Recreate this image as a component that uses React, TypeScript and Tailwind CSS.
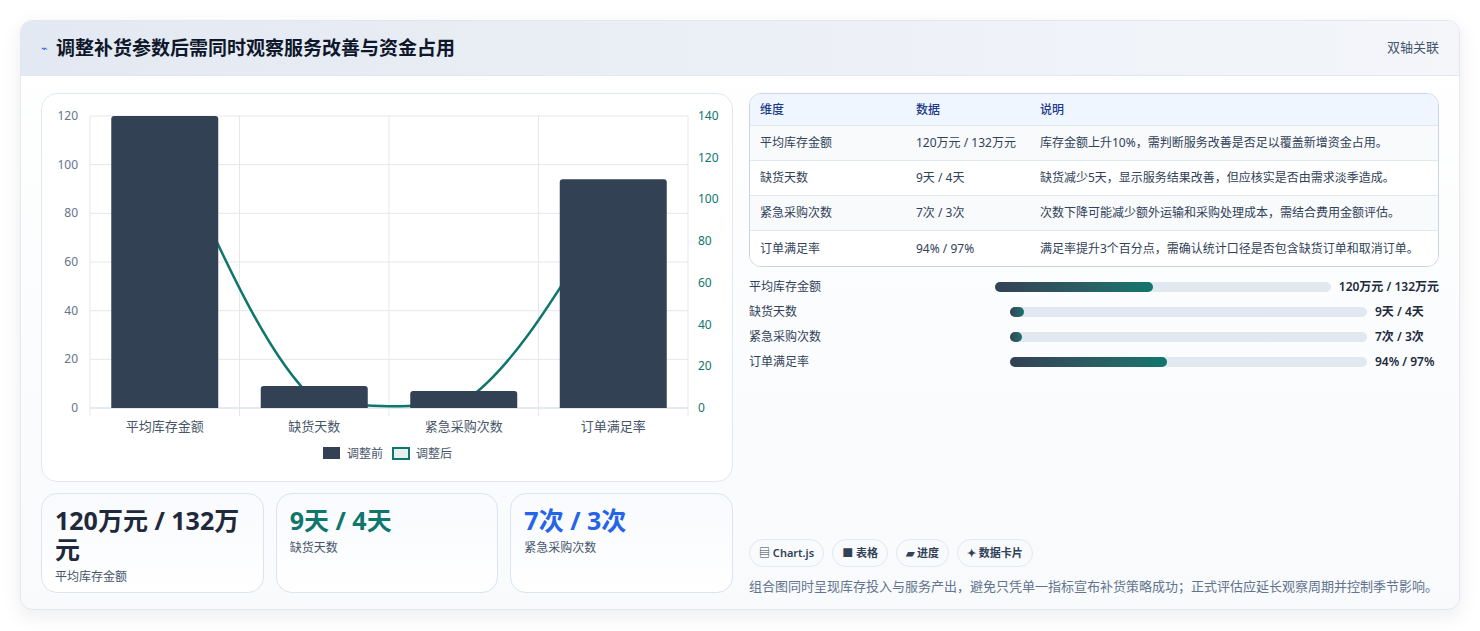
import React from 'react';

const font = { fontFamily: '"Noto Sans", "Noto Sans CJK SC", sans-serif' };

const rows = [
  { name: '平均库存金额', data: '120万元 / 132万元', note: '库存金额上升10%，需判断服务改善是否足以覆盖新增资金占用。' },
  { name: '缺货天数', data: '9天 / 4天', note: '缺货减少5天，显示服务结果改善，但应核实是否由需求淡季造成。' },
  { name: '紧急采购次数', data: '7次 / 3次', note: '次数下降可能减少额外运输和采购处理成本，需结合费用金额评估。' },
  { name: '订单满足率', data: '94% / 97%', note: '满足率提升3个百分点，需确认统计口径是否包含缺货订单和取消订单。' },
];

const progress = [
  { name: '平均库存金额', value: '120万元 / 132万元', pct: 47 },
  { name: '缺货天数', value: '9天 / 4天', pct: 4 },
  { name: '紧急采购次数', value: '7次 / 3次', pct: 3.5 },
  { name: '订单满足率', value: '94% / 97%', pct: 44 },
];

function Chart() {
  const left = 48, right = 646, top = 22, bottom = 314;
  const slot = (right - left) / 4;
  const before = [120, 9, 7, 94];
  const after = [132, 4, 3, 97];
  const yL = (v: number) => bottom - (v / 120) * (bottom - top);
  const yR = (v: number) => bottom - (v / 140) * (bottom - top);
  const pts = after.map((v, i) => [left + slot * (i + 0.5), yR(v)]);
  let d = `M${pts[0][0]},${pts[0][1]}`;
  for (let i = 0; i < pts.length - 1; i++) {
    const p0 = pts[i - 1] || pts[i];
    const p1 = pts[i];
    const p2 = pts[i + 1];
    const p3 = pts[i + 2] || p2;
    const t = 0.4 / 2;
    const c1 = [p1[0] + (p2[0] - p0[0]) * t, Math.min(bottom, p1[1] + (p2[1] - p0[1]) * t)];
    const c2 = [p2[0] - (p3[0] - p1[0]) * t, Math.min(bottom, p2[1] - (p3[1] - p1[1]) * t)];
    d += ` C${c1[0]},${c1[1]} ${c2[0]},${c2[1]} ${p2[0]},${p2[1]}`;
  }
  const labels = ['平均库存金额', '缺货天数', '紧急采购次数', '订单满足率'];
  return (
    <svg width="690" height="386" viewBox="0 0 690 386" style={font}>
      {[0, 20, 40, 60, 80, 100, 120].map((v) => (
        <g key={v}>
          <line x1={left} x2={right} y1={yL(v)} y2={yL(v)} stroke={v === 0 ? '#cbd5e1' : '#e5e7eb'} />
          <text x={36} y={yL(v) + 4} textAnchor="end" fontSize="12" fill="#64748b">{v}</text>
        </g>
      ))}
      {[0, 20, 40, 60, 80, 100, 120, 140].map((v) => (
        <text key={v} x={656} y={yR(v) + 4} fontSize="12" fill="#0f766e">{v}</text>
      ))}
      {[0, 1, 2, 3, 4].map((i) => (
        <line key={i} x1={left + slot * i} x2={left + slot * i} y1={top} y2={bottom + 8} stroke="#e5e7eb" />
      ))}
      <path d={d} fill="none" stroke="#0f766e" strokeWidth="2.5" />
      {before.map((v, i) => {
        const cx = left + slot * (i + 0.5);
        const y = yL(v);
        const w = 107;
        const r = 3;
        return (
          <path
            key={i}
            d={`M${cx - w / 2},${bottom} V${y + r} Q${cx - w / 2},${y} ${cx - w / 2 + r},${y} H${cx + w / 2 - r} Q${cx + w / 2},${y} ${cx + w / 2},${y + r} V${bottom} Z`}
            fill="#334155"
          />
        );
      })}
      {labels.map((l, i) => (
        <text key={l} x={left + slot * (i + 0.5)} y={337} textAnchor="middle" fontSize="13" fill="#475569">{l}</text>
      ))}
      <rect x={281} y={353} width={17} height={12} fill="#334155" />
      <text x={305} y={364} fontSize="12" fill="#475569">调整前</text>
      <rect x={351} y={354} width={16} height={11} fill="#e6f1ef" stroke="#0f766e" strokeWidth="2" />
      <text x={374} y={364} fontSize="12" fill="#475569">调整后</text>
    </svg>
  );
}

export default function App() {
  return (
    <div className="w-[1480px] h-[631px] bg-white pt-5 px-5" style={font}>
      <div className="h-[590px] rounded-xl border border-slate-200 bg-gradient-to-b from-white to-slate-50 shadow-[0_6px_20px_rgba(15,23,42,0.08)] overflow-hidden">
        <div className="h-[55px] flex items-center justify-between px-5 bg-gradient-to-r from-[#e3e9f2] to-[#f4f6fa] border-b border-slate-200">
          <div className="flex items-center gap-2">
            <span className="text-[#2563eb] text-[11px]">⌁</span>
            <h1 className="text-[19px] font-bold text-[#0f172a]">调整补货参数后需同时观察服务改善与资金占用</h1>
          </div>
          <span className="text-[13px] text-slate-600">双轴关联</span>
        </div>
        <div className="flex gap-4 px-5 pt-[17px]">
          <div className="w-[692px] flex flex-col gap-[11px]">
            <div className="h-[389px] rounded-2xl border border-slate-200 bg-white">
              <Chart />
            </div>
            <div className="grid grid-cols-3 gap-3">
              {[
                { v: '120万元 / 132万元', l: '平均库存金额', c: 'text-[#1e293b]' },
                { v: '9天 / 4天', l: '缺货天数', c: 'text-[#0f766e]' },
                { v: '7次 / 3次', l: '紧急采购次数', c: 'text-[#2563eb]' },
              ].map((s) => (
                <div key={s.l} className="h-[100px] rounded-2xl border border-[#dbe4f0] bg-gradient-to-b from-[#f8fafd] to-white px-[13px] pt-[12px]">
                  <div className={`text-[25px] font-bold leading-[29px] ${s.c}`}>{s.v}</div>
                  <div className="text-[12px] text-slate-600 mt-1">{s.l}</div>
                </div>
              ))}
            </div>
          </div>
          <div className="flex-1 flex flex-col">
            <div className="rounded-xl border border-slate-300 overflow-hidden text-[12px] bg-white">
              <div className="flex h-[32px] items-center bg-[#eff6ff] text-[#1e3a8a] font-medium border-b border-slate-200">
                <div className="w-[166px] pl-[10px]">维度</div>
                <div className="w-[124px]">数据</div>
                <div>说明</div>
              </div>
              {rows.map((r, i) => (
                <div key={r.name} className={`flex h-[35px] items-center text-slate-700 ${i < 3 ? 'border-b border-slate-200' : ''} ${i % 2 === 0 ? 'bg-[#f8fafc]' : 'bg-white'}`}>
                  <div className="w-[166px] pl-[10px]">{r.name}</div>
                  <div className="w-[124px]">{r.data}</div>
                  <div>{r.note}</div>
                </div>
              ))}
            </div>
            <div className="flex flex-col gap-[9px] mt-[12px] text-[12px] text-slate-700">
              {progress.map((p) => (
                <div key={p.name} className="flex items-center h-[16px]">
                  <div className="w-[246px] shrink-0">{p.name}</div>
                  <div className={`flex-1 h-[10px] rounded-full bg-[#e2e8f0] ${p.name === '平均库存金额' ? '' : 'ml-[15px]'}`}>
                    <div className="h-full rounded-full bg-gradient-to-r from-[#334155] to-[#0f766e]" style={{ width: `${p.pct}%` }} />
                  </div>
                  <div className={`font-semibold text-slate-800 pl-2 ${p.name === '平均库存金额' ? '' : 'w-[72px]'}`}>{p.value}</div>
                </div>
              ))}
            </div>
            <div className="flex gap-2 mt-[169px]">
              {['▤ Chart.js', '■ 表格', '▰ 进度', '✦ 数据卡片'].map((t) => (
                <span key={t} className="h-[28px] px-[9px] flex items-center rounded-full border border-slate-200 bg-[#f8fafc] text-[11px] font-semibold text-slate-700">{t}</span>
              ))}
            </div>
            <p className="mt-[10px] text-[13px] text-slate-500">组合图同时呈现库存投入与服务产出，避免只凭单一指标宣布补货策略成功；正式评估应延长观察周期并控制季节影响。</p>
          </div>
        </div>
      </div>
    </div>
  );
}
